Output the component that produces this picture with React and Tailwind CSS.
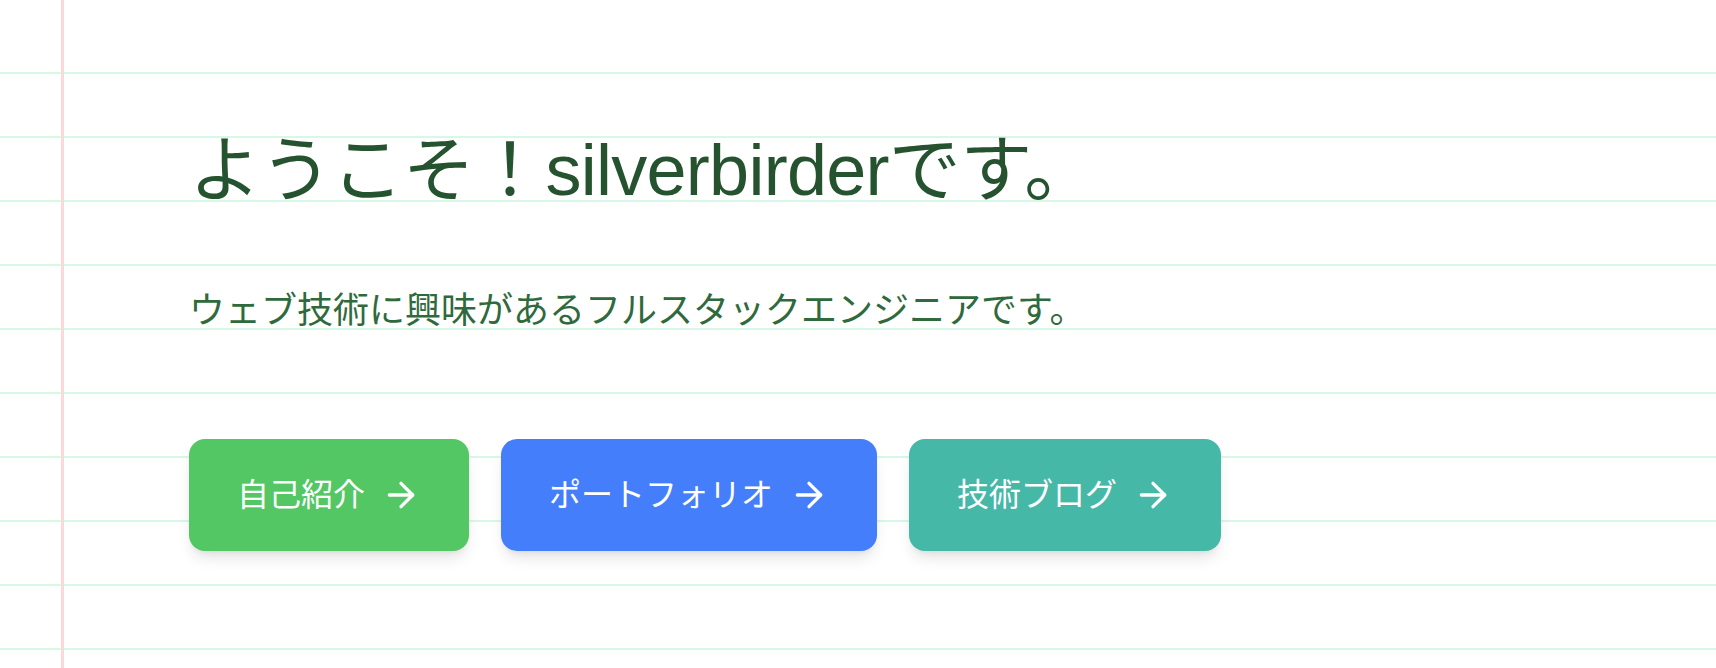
import { ArrowRight } from "lucide-react";

const links = [
  { label: "自己紹介", color: "bg-[#52c763]" },
  { label: "ポートフォリオ", color: "bg-[#447efb]" },
  { label: "技術ブログ", color: "bg-[#46b8a7]" },
];

export default function App() {
  return (
    <div className="min-h-[668px] w-full bg-white bg-[image:linear-gradient(to_right,transparent_61px,#fdd8d8_61px,#fdd8d8_64px,transparent_64px),linear-gradient(to_bottom,#ffffff_12px,transparent_12px),linear-gradient(to_bottom,transparent_62px,#d7f7e7_62px)] bg-[size:100%_100%,100%_100%,100%_64px] bg-[position:0_0,0_0,0_10px] font-['Liberation_Sans','Noto_Sans_CJK_JP',sans-serif]">
      <main className="pl-[189px] pt-[134px] pb-[80px]">
        <h1 className="text-7xl leading-none tracking-[-0.01em] text-[#26532f]">
          ようこそ！silverbirderです。
        </h1>
        <p className="mt-[85px] text-4xl leading-10 text-[#2f6a3c]">
          ウェブ技術に興味があるフルスタックエンジニアです。
        </p>
        <div className="mt-[108px] flex gap-8">
          {links.map((link) => (
            <a
              key={link.label}
              href="#"
              className={`${link.color} flex h-[112px] items-center gap-4 rounded-2xl px-12 text-[32px] text-white shadow-lg`}
            >
              <span>{link.label}</span>
              <ArrowRight size={40} strokeWidth={2} />
            </a>
          ))}
        </div>
      </main>
    </div>
  );
}
